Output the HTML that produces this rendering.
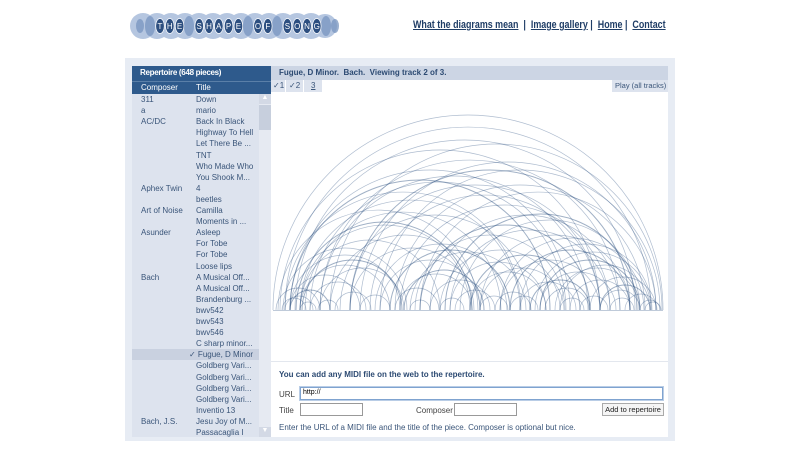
<!DOCTYPE html>
<html><head><meta charset="utf-8"><style>
*{margin:0;padding:0;box-sizing:border-box}
body{width:800px;height:450px;background:#fff;font-family:"Liberation Sans",Arial,sans-serif;position:relative;overflow:hidden;font-size:8px;color:#2c4a72}
.nav{position:absolute;left:413px;top:19px;font-size:11px;font-weight:bold;color:#1f3d66;white-space:nowrap;transform:scaleX(0.81);transform-origin:0 0}
.nav a{color:#1f3d66;text-decoration:underline}
.panel{position:absolute;left:125px;top:58px;width:550px;height:383px;background:#e7ecf4}
.list{position:absolute;left:132px;top:66px;width:139px;height:371px;background:#dde3ee;overflow:hidden}
.lh{background:#2e5a8c;color:#fff;height:28px;position:relative}
.lh .t{font-weight:bold;font-size:8px;padding-left:8px;height:15px;line-height:14px;letter-spacing:-0.3px}
.lh .c{font-size:8px;padding-left:9px;border-top:1px solid #5a7fa8;height:13px;line-height:12px;position:relative}
.row{position:absolute;left:0;width:127px;height:11px;font-size:8px;line-height:11px;color:#3a5579}
.row .a{position:absolute;left:9px}.row .b{position:absolute;left:64px;white-space:nowrap}
.sb{position:absolute;left:127px;top:28px;width:12px;height:343px;background:#e6eaf2}
.main{position:absolute;left:271px;top:66px;width:397px;height:371px;background:#fff}
.mh{background:#ccd5e4;height:14px;font-weight:bold;font-size:8px;line-height:14px;padding-left:8px;color:#2c4a72}
.tabs{height:12px;background:#fff;position:relative}
.tab{position:absolute;top:0;height:12px;background:#dde3ee;font-size:8px;line-height:12px;color:#3a5579;white-space:nowrap}
.form{position:absolute;left:0;top:295px;width:397px;height:76px;border-top:1px solid #e3e7ee}
.form .h{position:absolute;left:8px;top:8px;font-weight:bold;font-size:8px}
.inp{position:absolute;background:#fff;border:1px solid #999}
.lbl{position:absolute;font-size:8px;color:#444;white-space:nowrap}
</style></head><body>
<svg style="position:absolute;left:130px;top:8px" width="215" height="36">
<g fill="#b5c6e0">
<circle cx="13" cy="18" r="13"/><circle cx="27" cy="18" r="13"/><circle cx="41" cy="18" r="13"/><circle cx="55" cy="18" r="13"/><circle cx="69" cy="18" r="13"/><circle cx="83" cy="18" r="13"/><circle cx="97" cy="18" r="13"/><circle cx="111" cy="18" r="13"/><circle cx="125" cy="18" r="13"/><circle cx="139" cy="18" r="13"/><circle cx="153" cy="18" r="13"/><circle cx="167" cy="18" r="13"/><circle cx="181" cy="18" r="13"/><circle cx="195" cy="18" r="12"/></g>
<g fill="#7895c0" opacity=".75">
<ellipse cx="10" cy="18" rx="4" ry="7"/><ellipse cx="20" cy="18" rx="5" ry="10"/><ellipse cx="59" cy="18" rx="5" ry="10"/><ellipse cx="118" cy="18" rx="5" ry="10"/><ellipse cx="147" cy="18" rx="5" ry="10"/><ellipse cx="196" cy="18" rx="5" ry="10"/><ellipse cx="205" cy="18" rx="4" ry="7"/></g>
<g fill="#2d4f80" stroke="#fff" stroke-width=".7">
<ellipse cx="30" cy="18" rx="4.3" ry="7.5"/><ellipse cx="39.8" cy="18" rx="4.3" ry="7.5"/><ellipse cx="49.6" cy="18" rx="4.3" ry="7.5"/><ellipse cx="69.2" cy="18" rx="4.3" ry="7.5"/><ellipse cx="79" cy="18" rx="4.3" ry="7.5"/><ellipse cx="88.8" cy="18" rx="4.3" ry="7.5"/><ellipse cx="98.6" cy="18" rx="4.3" ry="7.5"/><ellipse cx="108.4" cy="18" rx="4.3" ry="7.5"/><ellipse cx="128" cy="18" rx="4.3" ry="7.5"/><ellipse cx="137.8" cy="18" rx="4.3" ry="7.5"/><ellipse cx="157.4" cy="18" rx="4.3" ry="7.5"/><ellipse cx="167.2" cy="18" rx="4.3" ry="7.5"/><ellipse cx="177" cy="18" rx="4.3" ry="7.5"/><ellipse cx="186.8" cy="18" rx="4.3" ry="7.5"/></g>
<g fill="#fff" font-family="Liberation Sans" font-size="8" text-anchor="middle">
<text x="30" y="21">T</text><text x="39.8" y="21">H</text><text x="49.6" y="21">E</text><text x="69.2" y="21">S</text><text x="79" y="21">H</text><text x="88.8" y="21">A</text><text x="98.6" y="21">P</text><text x="108.4" y="21">E</text><text x="128" y="21">O</text><text x="137.8" y="21">F</text><text x="157.4" y="21">S</text><text x="167.2" y="21">O</text><text x="177" y="21">N</text><text x="186.8" y="21">G</text></g>
</svg>
<div class="nav"><a>What the diagrams mean</a> &nbsp;|&nbsp; <a>Image gallery</a> | &nbsp;<a>Home</a> | &nbsp;<a>Contact</a></div>
<div class="panel"></div>
<div class="list">
<div class="lh"><div class="t">Repertoire (648 pieces)</div><div class="c">Composer<span style="position:absolute;left:64px">Title</span></div></div>
<div class="sb"><div style="height:10px;background:#d3d9e5;font-size:7px;color:#fff;text-align:center">▲</div><div style="height:25px;background:#c7cfdd;margin-top:1px"></div><div style="position:absolute;bottom:0;width:12px;height:10px;background:#d3d9e5;font-size:7px;color:#fff;text-align:center">▼</div></div>
<div class="row" style="top:28px"><span class="a">311</span><span class="b">Down</span></div>
<div class="row" style="top:39.1px"><span class="a">a</span><span class="b">mario</span></div>
<div class="row" style="top:50.2px"><span class="a">AC/DC</span><span class="b">Back In Black</span></div>
<div class="row" style="top:61.3px"><span class="b">Highway To Hell</span></div>
<div class="row" style="top:72.4px"><span class="b">Let There Be ...</span></div>
<div class="row" style="top:83.5px"><span class="b">TNT</span></div>
<div class="row" style="top:94.6px"><span class="b">Who Made Who</span></div>
<div class="row" style="top:105.7px"><span class="b">You Shook M...</span></div>
<div class="row" style="top:116.8px"><span class="a">Aphex Twin</span><span class="b">4</span></div>
<div class="row" style="top:127.9px"><span class="b">beetles</span></div>
<div class="row" style="top:139px"><span class="a">Art of Noise</span><span class="b">Camilla</span></div>
<div class="row" style="top:150.1px"><span class="b">Moments in ...</span></div>
<div class="row" style="top:161.2px"><span class="a">Asunder</span><span class="b">Asleep</span></div>
<div class="row" style="top:172.3px"><span class="b">For Tobe</span></div>
<div class="row" style="top:183.4px"><span class="b">For Tobe</span></div>
<div class="row" style="top:194.5px"><span class="b">Loose lips</span></div>
<div class="row" style="top:205.6px"><span class="a">Bach</span><span class="b">A Musical Off...</span></div>
<div class="row" style="top:216.7px"><span class="b">A Musical Off...</span></div>
<div class="row" style="top:227.8px"><span class="b">Brandenburg ...</span></div>
<div class="row" style="top:238.9px"><span class="b">bwv542</span></div>
<div class="row" style="top:250px"><span class="b">bwv543</span></div>
<div class="row" style="top:261.1px"><span class="b">bwv546</span></div>
<div class="row" style="top:272.2px"><span class="b">C sharp minor...</span></div>
<div class="row" style="top:283.3px;background:#c9d1e0"><span class="b" style="left:57px">✓ Fugue, D Minor</span></div>
<div class="row" style="top:294.4px"><span class="b">Goldberg Vari...</span></div>
<div class="row" style="top:305.5px"><span class="b">Goldberg Vari...</span></div>
<div class="row" style="top:316.6px"><span class="b">Goldberg Vari...</span></div>
<div class="row" style="top:327.7px"><span class="b">Goldberg Vari...</span></div>
<div class="row" style="top:338.8px"><span class="b">Inventio 13</span></div>
<div class="row" style="top:349.9px"><span class="a">Bach, J.S.</span><span class="b">Jesu Joy of M...</span></div>
<div class="row" style="top:361px"><span class="b">Passacaglia I</span></div>
</div>
<div class="main">
<div class="mh">Fugue, D Minor.&nbsp; Bach.&nbsp; Viewing track 2 of 3.</div>
<div class="tabs"><div class="tab" style="left:0;width:14px;padding-left:2px">✓1</div><div class="tab" style="left:15px;width:17px;padding-left:3px">✓2</div><div class="tab" style="left:33px;width:18px;padding-left:7px;text-decoration:underline">3</div><div class="tab" style="left:341px;width:56px;padding-left:3px;font-size:7.5px">Play (all tracks)</div></div>
<svg style="position:absolute;left:0;top:0" width="397" height="250" viewBox="271 66 397 250">
<g fill="none" stroke="#2a5080" stroke-width=".7" stroke-opacity=".38">
<path d="M273 310A195 195 0 0 1 663 310"/><path d="M285 310A183 183 0 0 1 651 310"/><path d="M295 310A170 170 0 0 1 635 310"/><path d="M280 310A160 160 0 0 1 600 310"/><path d="M330 310A166 166 0 0 1 662 310"/><path d="M310 310A128 128 0 0 1 566 310"/><path d="M380 310A140 140 0 0 1 660 310"/><path d="M285 310A118 118 0 0 1 521 310"/><path d="M420 310A118 118 0 0 1 656 310"/><path d="M350 310A125 125 0 0 1 600 310"/><path d="M300 310A85 85 0 0 1 470 310"/><path d="M460 310A90 90 0 0 1 640 310"/><path d="M278 310A100 100 0 0 1 478 310"/><path d="M400 310A105 105 0 0 1 610 310"/><path d="M320 310A150 150 0 0 1 620 310"/><path d="M290 310A140 140 0 0 1 570 310"/><path d="M360 310A148 148 0 0 1 656 310"/><path d="M300 310A110 110 0 0 1 520 310"/><path d="M340 310A95 95 0 0 1 530 310"/><path d="M430 310A95 95 0 0 1 620 310"/><path d="M300 310A70 70 0 0 1 440 310"/><path d="M415 310A75 75 0 0 1 565 310"/><path d="M480 310A75 75 0 0 1 630 310"/><path d="M283 310A62 62 0 0 1 407 310"/><path d="M350 310A62 62 0 0 1 474 310"/><path d="M520 310A66 66 0 0 1 652 310"/><path d="M440 310A60 60 0 0 1 560 310"/><path d="M300 310A45 45 0 0 1 390 310"/><path d="M380 310A50 50 0 0 1 480 310"/><path d="M450 310A48 48 0 0 1 546 310"/><path d="M500 310A50 50 0 0 1 600 310"/><path d="M560 310A45 45 0 0 1 650 310"/><path d="M290 310A35 35 0 0 1 360 310"/><path d="M400 310A36 36 0 0 1 472 310"/><path d="M470 310A38 38 0 0 1 546 310"/><path d="M540 310A38 38 0 0 1 616 310"/><path d="M590 310A33 33 0 0 1 656 310"/><path d="M310 310A28 28 0 0 1 366 310"/><path d="M430 310A30 30 0 0 1 490 310"/><path d="M520 310A28 28 0 0 1 576 310"/><path d="M570 310A30 30 0 0 1 630 310"/><path d="M276 310A22 22 0 0 1 320 310"/><path d="M395 310A22 22 0 0 1 439 310"/><path d="M455 310A20 20 0 0 1 495 310"/><path d="M545 310A22 22 0 0 1 589 310"/><path d="M600 310A20 20 0 0 1 640 310"/><path d="M625 310A16 16 0 0 1 657 310"/><path d="M285 310A14 14 0 0 1 313 310"/><path d="M360 310A15 15 0 0 1 390 310"/><path d="M480 310A14 14 0 0 1 508 310"/><path d="M510 310A14 14 0 0 1 538 310"/><path d="M580 310A14 14 0 0 1 608 310"/><path d="M410 310A10 10 0 0 1 430 310"/><path d="M300 310A8 8 0 0 1 316 310"/><path d="M640 310A10 10 0 0 1 660 310"/><path d="M320 310A134 134 0 0 1 588 310"/><path d="M370 310A115 115 0 0 1 600 310"/><path d="M395 310A125 125 0 0 1 645 310"/><path d="M305 310A98 98 0 0 1 501 310"/><path d="M450 310A80 80 0 0 1 610 310"/><path d="M330 310A75 75 0 0 1 480 310"/><path d="M375 310A66 66 0 0 1 507 310"/><path d="M500 310A72 72 0 0 1 644 310"/><path d="M290 310A55 55 0 0 1 400 310"/><path d="M410 310A58 58 0 0 1 526 310"/><path d="M535 310A58 58 0 0 1 651 310"/><path d="M320 310A42 42 0 0 1 404 310"/><path d="M480 310A42 42 0 0 1 564 310"/><path d="M555 310A42 42 0 0 1 639 310"/>
<path d="M282 310A12 12 0 0 1 306 310"/><path d="M318 310A10 10 0 0 1 338 310"/><path d="M335 310A18 18 0 0 1 371 310"/><path d="M440 310A12 12 0 0 1 464 310"/><path d="M495 310A18 18 0 0 1 531 310"/><path d="M560 310A12 12 0 0 1 584 310"/><path d="M610 310A12 12 0 0 1 634 310"/><path d="M645 310A8 8 0 0 1 661 310"/>
</g>
<g fill="none" stroke="#1f4678" stroke-width="1" stroke-opacity=".42">
<path d="M296 310A88 88 0 0 1 472 310"/><path d="M420 310A85 85 0 0 1 590 310"/><path d="M445 310A96 96 0 0 1 637 310"/><path d="M302 310A50 50 0 0 1 402 310"/><path d="M470 310A55 55 0 0 1 580 310"/><path d="M540 310A50 50 0 0 1 640 310"/><path d="M404 310A40 40 0 0 1 484 310"/><path d="M600 310A25 25 0 0 1 650 310"/><path d="M290 310A20 20 0 0 1 330 310"/><path d="M530 310A30 30 0 0 1 590 310"/><path d="M350 310A140 140 0 0 1 630 310"/><path d="M290 310A130 130 0 0 1 550 310"/><path d="M390 310A60 60 0 0 1 510 310"/><path d="M510 310A60 60 0 0 1 630 310"/>
</g>
<line x1="273" y1="310.5" x2="663" y2="310.5" stroke="#2a5080" stroke-opacity=".3" stroke-width="1"/>
</svg>
<div class="form">
<div class="h">You can add any MIDI file on the web to the repertoire.</div>
<div class="lbl" style="left:8px;top:28px">URL</div>
<div class="inp" style="left:29px;top:25px;width:363px;height:13px;border:1px solid #7fa3d0;box-shadow:0 0 0 1px #b9cde6;font-size:7px;padding:1px 2px;color:#000">http://</div>
<div class="lbl" style="left:8px;top:44px">Title</div>
<div class="inp" style="left:29px;top:41px;width:63px;height:13px"></div>
<div class="lbl" style="left:145px;top:44px">Composer</div>
<div class="inp" style="left:183px;top:41px;width:63px;height:13px"></div>
<div class="inp" style="left:331px;top:41px;width:62px;height:13px;background:#f5f5f5;border-color:#aaa;font-size:7.5px;color:#222;text-align:center;line-height:11px;white-space:nowrap">Add to repertoire</div>
<div class="lbl" style="left:8px;top:61px;color:#3a5579">Enter the URL of a MIDI file and the title of the piece. Composer is optional but nice.</div>
</div>
</div>
</body></html>
